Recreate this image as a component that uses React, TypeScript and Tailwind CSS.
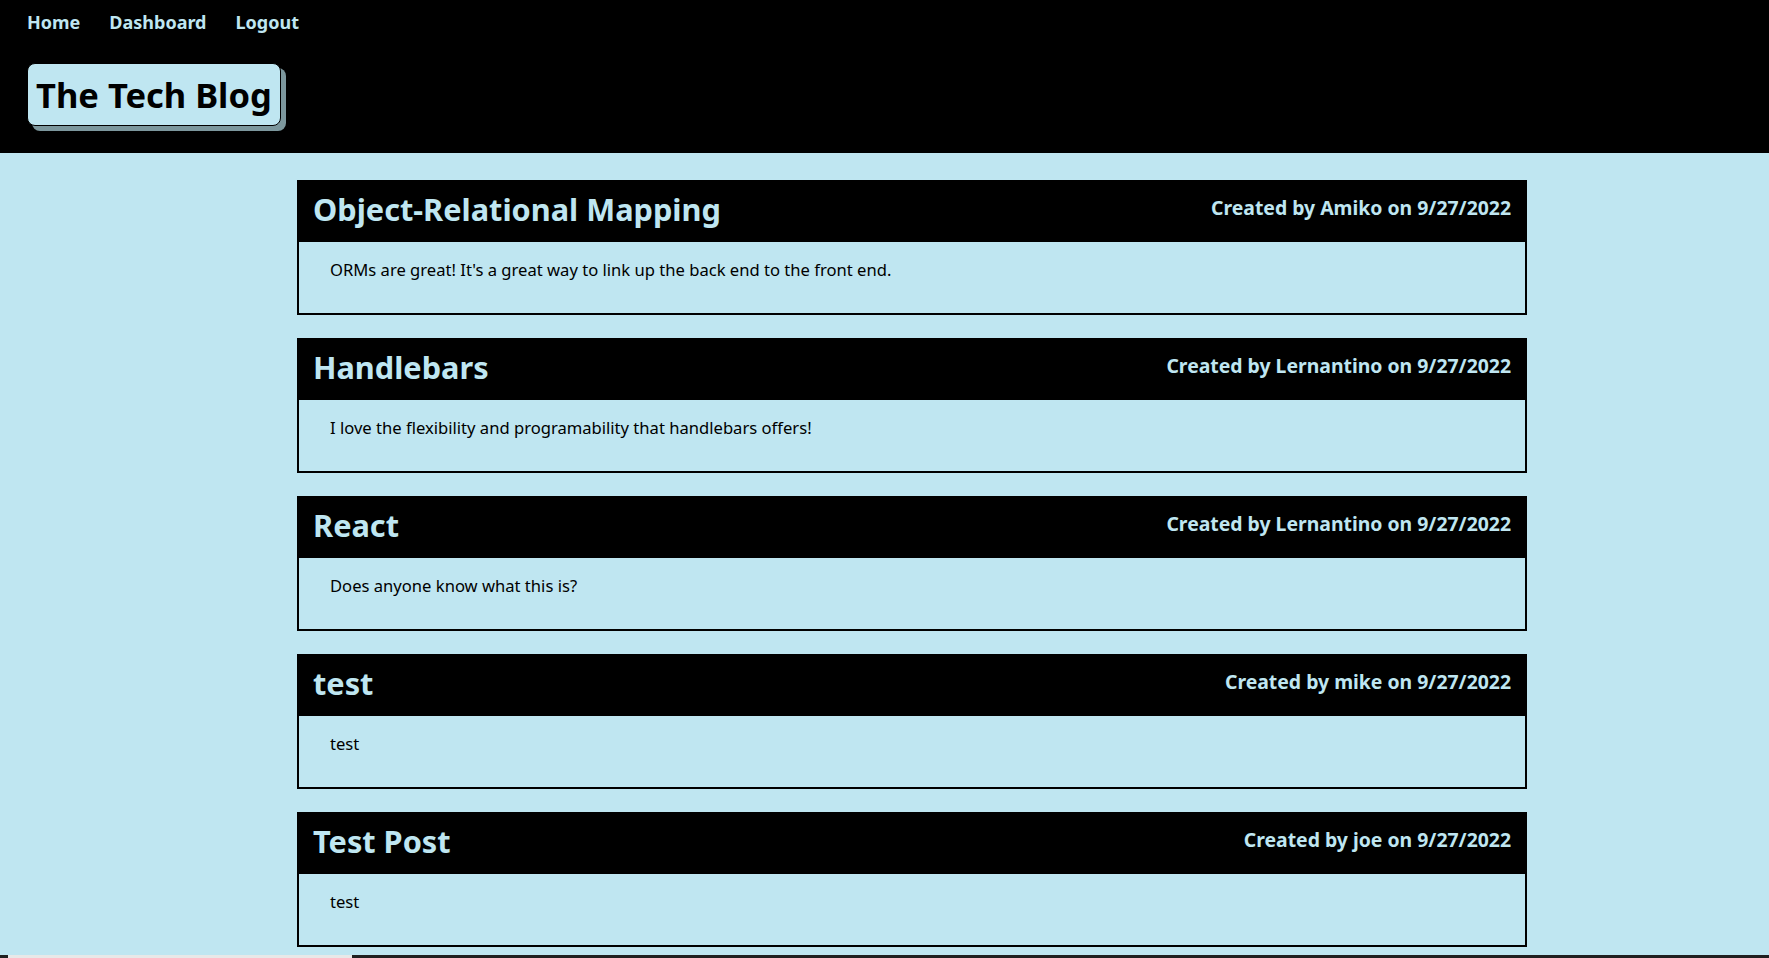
const posts = [
  {
    title: 'Object-Relational Mapping',
    author: 'Amiko',
    body: "ORMs are great! It's a great way to link up the back end to the front end.",
  },
  {
    title: 'Handlebars',
    author: 'Lernantino',
    body: 'I love the flexibility and programability that handlebars offers!',
  },
  { title: 'React', author: 'Lernantino', body: 'Does anyone know what this is?' },
  { title: 'test', author: 'mike', body: 'test' },
  { title: 'Test Post', author: 'joe', body: 'test' },
];

export default function App() {
  return (
    <div className="min-h-screen bg-[#bfe6f1] font-['Noto_Sans',sans-serif]">
      {/* Header */}
      <header className="bg-black h-[153px] pl-[27px] pt-[9px]">
        <nav className="flex gap-[29px] text-[18px] font-bold text-[#bfe6f1]">
          <a href="#">Home</a>
          <a href="#">Dashboard</a>
          <a href="#">Logout</a>
        </nav>
        <h1 className="mt-[27px] inline-block rounded-lg border border-black bg-[#bfe6f1] px-[8px] py-[4px] text-[34.5px] leading-[53px] font-bold text-black shadow-[5px_5px_0_#7c979d]">
          The Tech Blog
        </h1>
      </header>

      {/* Posts */}
      <main className="ml-[297px] w-[1230px] pt-[27px] pb-[20px] flex flex-col gap-[23px]">
        {posts.map((post, i) => (
          <article key={i} className="border-2 border-black">
            <div className="bg-black h-[60px] flex justify-between items-start px-[14px]">
              <h2 className="mt-[1px] text-[30.7px] leading-[52px] font-bold text-[#bfe6f1]">{post.title}</h2>
              <span className="mt-[11px] text-[19.4px] font-bold text-[#bfe6f1]">
                Created by {post.author} on 9/27/2022
              </span>
            </div>
            <p className="h-[71px] pl-[31px] pt-[16px] text-[16.6px] text-black">{post.body}</p>
          </article>
        ))}
      </main>

      <div className="fixed bottom-0 left-0 right-0 h-[3px] bg-[#202020] flex">
        <div className="ml-[8px] w-[344px] bg-[#e8e8e8]" />
      </div>
    </div>
  );
}
